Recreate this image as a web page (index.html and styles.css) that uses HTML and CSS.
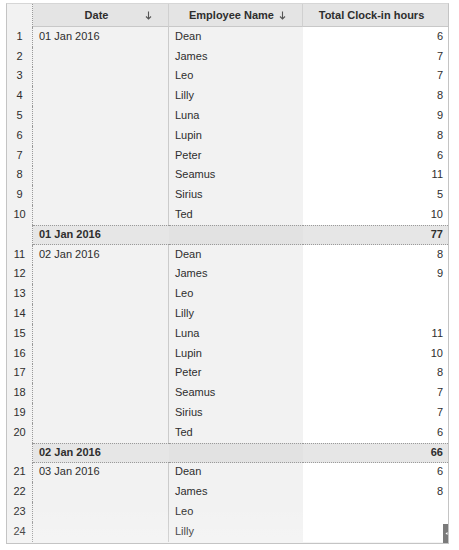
FILE: index.html
```html
<!DOCTYPE html>
<html>
<head>
<meta charset="utf-8">
<link rel="stylesheet" href="styles.css">
</head>
<body>
<div class="frame">
  <div class="grid">
    <div class="hd num"></div>
    <div class="hd">Date<svg class="arr" width="7" height="9" viewBox="0 0 7 9"><path d="M3.5 0.5V8M1 5.5L3.5 8L6 5.5" fill="none" stroke="#555" stroke-width="1.1"/></svg></div>
    <div class="hd">Employee Name<svg class="arr" width="7" height="9" viewBox="0 0 7 9"><path d="M3.5 0.5V8M1 5.5L3.5 8L6 5.5" fill="none" stroke="#555" stroke-width="1.1"/></svg></div>
    <div class="hd last">Total Clock-in hours</div>

    <div class="c num">1</div><div class="c date">01 Jan 2016</div><div class="c emp">Dean</div><div class="c tot">6</div>
    <div class="c num">2</div><div class="c date"></div><div class="c emp">James</div><div class="c tot">7</div>
    <div class="c num">3</div><div class="c date"></div><div class="c emp">Leo</div><div class="c tot">7</div>
    <div class="c num">4</div><div class="c date"></div><div class="c emp">Lilly</div><div class="c tot">8</div>
    <div class="c num">5</div><div class="c date"></div><div class="c emp">Luna</div><div class="c tot">9</div>
    <div class="c num">6</div><div class="c date"></div><div class="c emp">Lupin</div><div class="c tot">8</div>
    <div class="c num">7</div><div class="c date"></div><div class="c emp">Peter</div><div class="c tot">6</div>
    <div class="c num">8</div><div class="c date"></div><div class="c emp">Seamus</div><div class="c tot">11</div>
    <div class="c num">9</div><div class="c date"></div><div class="c emp">Sirius</div><div class="c tot">5</div>
    <div class="c num">10</div><div class="c date"></div><div class="c emp">Ted</div><div class="c tot">10</div>
    <div class="c num"></div><div class="c sum sdate">01 Jan 2016</div><div class="c sum semp"></div><div class="c sum stot">77</div>

    <div class="c num">11</div><div class="c date">02 Jan 2016</div><div class="c emp">Dean</div><div class="c tot">8</div>
    <div class="c num">12</div><div class="c date"></div><div class="c emp">James</div><div class="c tot">9</div>
    <div class="c num">13</div><div class="c date"></div><div class="c emp">Leo</div><div class="c tot"></div>
    <div class="c num">14</div><div class="c date"></div><div class="c emp">Lilly</div><div class="c tot"></div>
    <div class="c num">15</div><div class="c date"></div><div class="c emp">Luna</div><div class="c tot">11</div>
    <div class="c num">16</div><div class="c date"></div><div class="c emp">Lupin</div><div class="c tot">10</div>
    <div class="c num">17</div><div class="c date"></div><div class="c emp">Peter</div><div class="c tot">8</div>
    <div class="c num">18</div><div class="c date"></div><div class="c emp">Seamus</div><div class="c tot">7</div>
    <div class="c num">19</div><div class="c date"></div><div class="c emp">Sirius</div><div class="c tot">7</div>
    <div class="c num">20</div><div class="c date"></div><div class="c emp">Ted</div><div class="c tot">6</div>
    <div class="c num"></div><div class="c sum sdate">02 Jan 2016</div><div class="c sum semp"></div><div class="c sum stot">66</div>

    <div class="c num">21</div><div class="c date">03 Jan 2016</div><div class="c emp">Dean</div><div class="c tot">6</div>
    <div class="c num">22</div><div class="c date"></div><div class="c emp">James</div><div class="c tot">8</div>
    <div class="c num">23</div><div class="c date"></div><div class="c emp">Leo</div><div class="c tot"></div>
    <div class="c num">24</div><div class="c date"></div><div class="c emp">Lilly</div><div class="c tot"></div>
  </div>
  <div class="fade"></div>
  <div class="thumb"><svg width="6" height="19" viewBox="0 0 6 19"><path d="M2.5 9.5L4.5 8V11Z" fill="#fff"/></svg></div>
</div>
</body>
</html>
```
FILE: styles.css
```css
html, body {
  margin: 0;
  padding: 0;
  background: #fff;
}
body {
  padding: 3px 0 0 6px;
  font-family: "Liberation Sans", Arial, sans-serif;
  font-size: 11px;
  color: #2e2e2e;
}
.frame {
  position: relative;
  width: 441px;
  height: 539px;
  border: 1px solid #c4c4c4;
  border-top-color: #d6d6d6;
  overflow: hidden;
  background: #f2f2f2;
}
.grid {
  display: grid;
  grid-template-columns: 26px 136px 134px 145px;
  grid-template-rows: 23px;
  grid-auto-rows: 19.8px;
}
.hd {
  position: relative;
  background: #e4e4e4;
  border-bottom: 1px solid #c8c8c8;
  border-right: 1px solid #d0d0d0;
  font-weight: bold;
  display: flex;
  align-items: center;
  justify-content: center;
  padding-right: 8px;
  padding-bottom: 1px;
  box-sizing: border-box;
}
.hd.num {
  background: #f2f2f2;
  border-bottom: none;
  border-right: 1px dotted #999;
  padding: 0;
}
.hd.last {
  border-right: none;
}
.arr {
  position: absolute;
  right: 16px;
  top: 7px;
}
.c {
  box-sizing: border-box;
  display: flex;
  align-items: center;
  white-space: nowrap;
  padding-bottom: 2px;
}
.num {
  justify-content: center;
  border-right: 1px dotted #999;
  background: #f2f2f2;
}
.date {
  padding-left: 6px;
  border-right: 1px solid #cbcbcb;
  background: #f2f2f2;
}
.emp {
  padding-left: 6px;
  background: #f2f2f2;
}
.tot {
  justify-content: flex-end;
  padding-right: 5px;
  background: #fff;
}
.sum {
  font-weight: bold;
  border-top: 1px dotted #9a9a9a;
  border-bottom: 1px dotted #9a9a9a;
  background: #e6e6e6;
}
.sdate {
  padding-left: 6px;
}
.semp {
  background: #e2e2e2;
}
.stot {
  justify-content: flex-end;
  padding-right: 5px;
}
.fade {
  position: absolute;
  left: 0;
  right: 0;
  bottom: 0;
  height: 40px;
  background: linear-gradient(to bottom, rgba(255,255,255,0), rgba(255,255,255,0.18));
  pointer-events: none;
}
.thumb {
  position: absolute;
  right: -1px;
  bottom: 0;
  width: 6px;
  height: 19px;
  background: #7a7a7a;
  display: flex;
}
```
